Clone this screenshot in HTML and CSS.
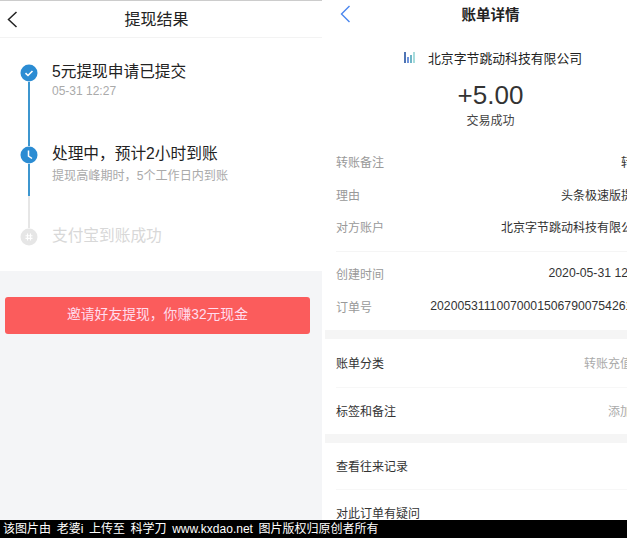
FILE: index.html
```html
<!DOCTYPE html>
<html lang="zh-CN">
<head>
    <meta charset="UTF-8">
    <title>提现结果 账单详情</title>
    <link rel="stylesheet" href="styles.css">
</head>
<body>
    <div class="page">
        <div class="panels">
            <div class="left-panel">
                <div class="result-card">
                    <div class="left-header">
                        <svg class="back-icon" width="11" height="17" viewBox="0 0 11 17"><path d="M9.5 1L1.5 8.5L9.5 16" fill="none" stroke="#222" stroke-width="1.5"/></svg>
                        <h1>提现结果</h1>
                    </div>
                    <div class="timeline">
                        <div class="step step-first">
                            <div class="step-rail">
                                <svg class="step-icon" width="18" height="18" viewBox="0 0 18 18"><circle cx="9" cy="9" r="8.5" fill="#2b8cd3"/><path d="M5.5 9.2L8 11.5L12.5 7" fill="none" stroke="#fff" stroke-width="1.6"/></svg>
                                <div class="rail-line"></div>
                            </div>
                            <div class="step-text">
                                <div class="step-title">5元提现申请已提交</div>
                                <div class="step-sub">05-31 12:27</div>
                            </div>
                        </div>
                        <div class="step step-second">
                            <div class="step-rail">
                                <svg class="step-icon" width="18" height="18" viewBox="0 0 18 18"><circle cx="9" cy="9" r="8.5" fill="#2b8cd3"/><path d="M8.5 4.5V10L12 12.5" fill="none" stroke="#fff" stroke-width="1.5"/></svg>
                                <div class="rail-line rail-short"></div>
                                <div class="rail-line rail-off"></div>
                            </div>
                            <div class="step-text">
                                <div class="step-title">处理中，预计2小时到账</div>
                                <div class="step-note">提现高峰期时，5个工作日内到账</div>
                            </div>
                        </div>
                        <div class="step step-last">
                            <div class="step-rail">
                                <svg class="step-icon" width="18" height="18" viewBox="0 0 18 18"><circle cx="9" cy="9" r="8.5" fill="#e6e6e6"/><path d="M7.5 5.5V12.5M10.5 5.5V12.5M5.5 7.8H12.5M5.5 10.4H12.5" fill="none" stroke="#fff" stroke-width="1.1"/></svg>
                            </div>
                            <div class="step-text">
                                <div class="step-title step-off">支付宝到账成功</div>
                            </div>
                        </div>
                    </div>
                </div>
                <div class="invite-btn">邀请好友提现，你赚32元现金</div>
            </div>
            <div class="right-panel">
                <div class="bill">
                    <div class="bill-header">
                        <svg class="bill-back" width="11" height="18" viewBox="0 0 11 18"><path d="M9.5 1L1.5 9L9.5 17" fill="none" stroke="#4a86ee" stroke-width="1.4"/></svg>
                        <h2>账单详情</h2>
                    </div>
                    <div class="company">
                        <svg width="12" height="11" viewBox="0 0 12 11"><rect x="0" y="0" width="2" height="11" fill="#4f74b4"/><rect x="3" y="5" width="2" height="6" fill="#6f94dc"/><rect x="6" y="3" width="2" height="8" fill="#6fb6c8"/><rect x="9" y="0" width="2" height="11" fill="#a8dcdc"/></svg>
                        <span>北京字节跳动科技有限公司</span>
                    </div>
                    <div class="amount">+5.00</div>
                    <div class="status">交易成功</div>
                    <div class="info-group">
                        <div class="info-row"><span class="label">转账备注</span><span class="value">转账</span></div>
                        <div class="info-row"><span class="label">理由</span><span class="value">头条极速版提现</span></div>
                        <div class="info-row"><span class="label">对方账户</span><span class="value">北京字节跳动科技有限公司</span></div>
                    </div>
                    <div class="info-group info-group-split">
                        <div class="info-row"><span class="label">创建时间</span><span class="value value-num">2020-05-31 12:27</span></div>
                        <div class="info-row"><span class="label">订单号</span><span class="value value-num">20200531110070001506790075426118</span></div>
                    </div>
                    <div class="band band-first"></div>
                    <div class="link-row link-tall link-split"><span>账单分类</span><span class="link-value">转账充值</span></div>
                    <div class="link-row"><span>标签和备注</span><span class="link-value">添加</span></div>
                    <div class="band"></div>
                    <div class="link-row link-split"><span>查看往来记录</span></div>
                    <div class="link-row"><span>对此订单有疑问</span></div>
                </div>
            </div>
        </div>
        <div class="watermark">该图片由 老婆i 上传至 科学刀 www.kxdao.net 图片版权归原创者所有</div>
    </div>
</body>
</html>
```

FILE: styles.css
```css
body {
    margin: 0;
    background-color: #fff;
    font-family: "Liberation Sans", "Noto Sans CJK SC", sans-serif;
    color: #333;
}
.page {
    height: 100vh;
    display: flex;
    flex-direction: column;
    overflow: hidden;
}
.panels {
    flex: 1;
    min-height: 0;
    display: flex;
    overflow: hidden;
}

/* left screenshot */
.left-panel {
    width: 322px;
    margin-right: 3px;
    background-color: #f4f5f7;
    flex: none;
}
.result-card {
    height: 271px;
    background-color: #fff;
    border-top: 1px solid #ccc;
    box-sizing: border-box;
}
.left-header {
    height: 37px;
    display: flex;
    align-items: center;
    justify-content: center;
    position: relative;
    padding-right: 7px;
    box-sizing: border-box;
    border-bottom: 1px solid #f3f3f3;
}
.left-header h1 {
    margin: 0 2px 3px 0;
    font-size: 16px;
    font-weight: 400;
    color: #222;
}
.back-icon {
    position: absolute;
    left: 7px;
    top: 10px;
}
.timeline {
    padding-top: 26px;
    padding-left: 20px;
}
.step {
    display: flex;
    height: 82px;
}
.step-rail {
    width: 18px;
    margin-right: 14px;
    display: flex;
    flex-direction: column;
    align-items: center;
    flex: none;
}
.step-icon {
    display: block;
    flex: none;
}
.rail-line {
    width: 2px;
    flex: 1;
    background-color: #3d96cf;
}
.rail-short {
    flex: none;
    height: 32px;
}
.rail-off {
    background-color: #e6e6e6;
}
.step-title {
    font-size: 15.7px;
    line-height: 16px;
    color: #222;
}
.step-sub {
    font-size: 12px;
    line-height: 14px;
    color: #aaa;
    margin-top: 4px;
}
.step-note {
    font-size: 12.1px;
    line-height: 14px;
    color: #aaa;
    margin-top: 7px;
}
.step-off {
    color: #d8d8d8;
}
.invite-btn {
    margin: 26px 0 0 5px;
    width: 305px;
    height: 37px;
    line-height: 36px;
    border-radius: 3px;
    background-color: #fb5c5c;
    color: #fde;
    font-size: 13.8px;
    text-align: center;
}

/* right screenshot */
.right-panel {
    flex: 1;
    min-width: 0;
    overflow: hidden;
}
.bill {
    width: 331px;
    box-sizing: border-box;
    padding: 0 11px;
}
.bill-header {
    height: 28px;
    display: flex;
    align-items: center;
    justify-content: center;
    position: relative;
}
.bill-header h2 {
    margin: 0 0 2px;
    font-size: 14.5px;
    font-weight: 700;
    color: #222;
}
.bill-back {
    position: absolute;
    left: 4px;
    top: 5px;
}
.company {
    margin: 20px 0 0 68px;
    height: 18px;
    display: flex;
    align-items: center;
    gap: 12px;
    font-size: 12.85px;
    color: #222;
}
.amount {
    margin-top: 13px;
    text-align: center;
    font-size: 26px;
    line-height: 32px;
    color: #333;
}
.status {
    margin-top: 2px;
    text-align: center;
    font-size: 12px;
    line-height: 16px;
    color: #444;
}
.info-group {
    margin-top: 16px;
}
.info-group-split {
    margin-top: 8px;
    padding-top: 5px;
    border-top: 1px solid #f5f5f5;
}
.info-row {
    height: 32.7px;
    display: flex;
    align-items: center;
    justify-content: space-between;
    font-size: 12px;
    white-space: nowrap;
}
.label {
    color: #999;
}
.value {
    color: #333;
}
.value-num {
    font-size: 12.22px;
}
.band {
    height: 9px;
    margin: 0 -11px;
    background-color: #f5f5f5;
}
.band-first {
    margin-top: 7.5px;
}
.link-row {
    height: 46px;
    display: flex;
    align-items: center;
    justify-content: space-between;
    padding-right: 13px;
    font-size: 12px;
    color: #333;
}
.link-tall {
    height: 48px;
}
.link-split {
    border-bottom: 1px solid #f7f7f7;
}
.link-value {
    color: #aaa;
}

.watermark {
    height: 18px;
    flex: none;
    background-color: #000;
    color: #fff;
    font-size: 12px;
    line-height: 18px;
    padding-left: 3px;
    word-spacing: 2.3px;
    white-space: nowrap;
}
```
